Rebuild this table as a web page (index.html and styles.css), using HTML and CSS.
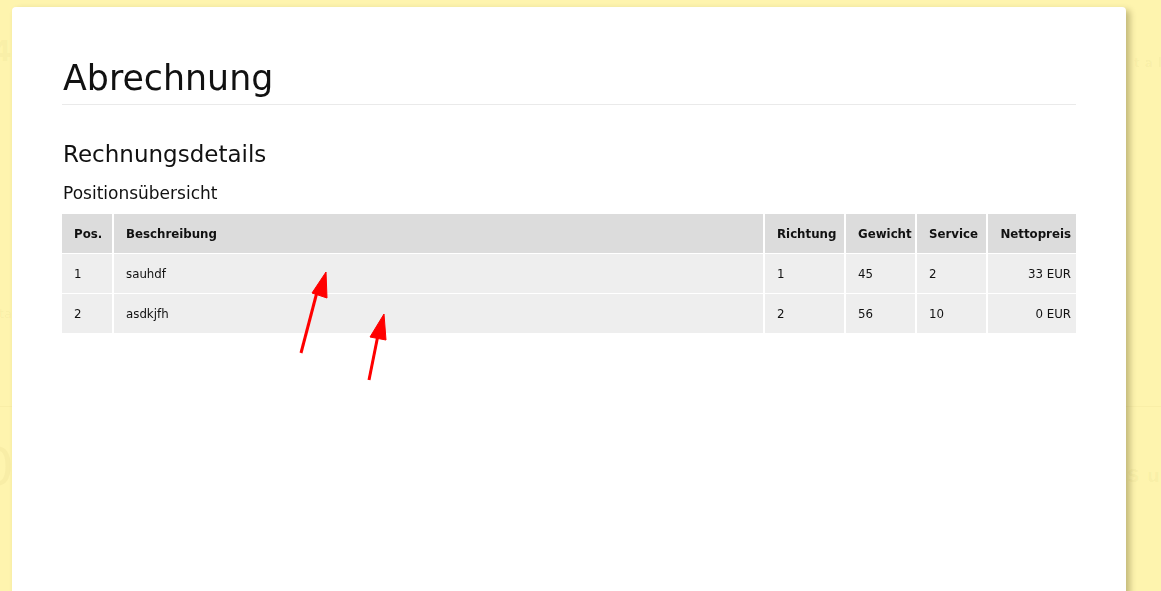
FILE: index.html
```html
<!DOCTYPE html>
<html lang="de">
<head>
<meta charset="utf-8">
<title>Abrechnung</title>
<link rel="stylesheet" href="styles.css">
</head>
<body>
<div class="dashboard">
  <div class="dash-row dash-row-top">
    <div class="dash-edge">
      <div class="dash-num">4</div>
      <div class="dash-small">sta</div>
    </div>
    <div class="dash-mid"></div>
    <div class="dash-side">
      <div class="dash-label">tal</div>
    </div>
  </div>
  <div class="dash-row dash-row-bottom">
    <div class="dash-edge">
      <div class="dash-big">0</div>
    </div>
    <div class="dash-mid"></div>
    <div class="dash-side">
      <div class="dash-label-lg">Sut</div>
    </div>
  </div>
</div>

<div class="modal">
  <h1 class="title">Abrechnung</h1>
  <h3 class="section">Rechnungsdetails</h3>
  <h4 class="subsection">Positionsübersicht</h4>
  <div class="grid-table" role="table">
    <div class="tr th-row" role="row">
      <div class="cell" role="columnheader">Pos.</div>
      <div class="cell" role="columnheader">Beschreibung</div>
      <div class="cell" role="columnheader">Richtung</div>
      <div class="cell" role="columnheader">Gewicht</div>
      <div class="cell" role="columnheader">Service</div>
      <div class="cell right" role="columnheader">Nettopreis</div>
    </div>
    <div class="tr" role="row">
      <div class="cell" role="cell">1</div>
      <div class="cell" role="cell">sauhdf</div>
      <div class="cell" role="cell">1</div>
      <div class="cell" role="cell">45</div>
      <div class="cell" role="cell">2</div>
      <div class="cell right" role="cell">33 EUR</div>
    </div>
    <div class="tr" role="row">
      <div class="cell" role="cell">2</div>
      <div class="cell" role="cell">asdkjfh</div>
      <div class="cell" role="cell">2</div>
      <div class="cell" role="cell">56</div>
      <div class="cell" role="cell">10</div>
      <div class="cell right" role="cell">0 EUR</div>
    </div>
  </div>
</div>

<svg class="arrows" width="1161" height="591" viewBox="0 0 1161 591" aria-hidden="true">
  <g fill="#ff0000" stroke="#ff0000">
    <line x1="301" y1="353" x2="317" y2="292" stroke-width="3"/>
    <polygon points="326,272 312,293 327,298" stroke-width="1" stroke-linejoin="round"/>
    <line x1="369" y1="380" x2="378" y2="335" stroke-width="3"/>
    <polygon points="384,314 370,337 386,340" stroke-width="1" stroke-linejoin="round"/>
  </g>
</svg>
</body>
</html>
```

FILE: styles.css
```css
html, body {
  margin: 0;
  padding: 0;
  height: 100%;
  overflow: hidden;
}

body {
  background: #fef4ae;
  font-family: "DejaVu Sans", "Liberation Sans", sans-serif;
  color: #222;
}

/* background dashboard (under the modal) */
.dashboard {
  color: rgba(120, 100, 0, 0.045);
}

.dash-row {
  display: grid;
  grid-template-columns: 12px 1fr 35px;
}

.dash-row-top {
  height: 406px;
  border-bottom: 1px solid rgba(120, 100, 0, 0.04);
}

.dash-edge {
  display: flex;
  flex-direction: column;
  align-items: flex-end;
}

.dash-num {
  margin-top: 34px;
  font-size: 29px;
  font-weight: bold;
  line-height: 34px;
}

.dash-small {
  margin-top: 238px;
  font-size: 13px;
  line-height: 16px;
}

.dash-big {
  margin-top: 30px;
  font-size: 52px;
  line-height: 60px;
  margin-right: -2px;
}

.dash-side {
  padding-left: 8px;
}

.dash-label {
  margin-top: 56px;
  font-size: 12px;
  font-weight: bold;
  letter-spacing: 5px;
  line-height: 14px;
}

.dash-label-lg {
  margin-top: 58px;
  font-size: 18px;
  font-weight: bold;
  letter-spacing: 7px;
  line-height: 22px;
  margin-left: -7px;
}

/* modal panel */
.modal {
  position: fixed;
  top: 7px;
  left: 12px;
  width: 1114px;
  height: 640px;
  box-sizing: border-box;
  background: #fff;
  border-radius: 4px;
  box-shadow: 4px 3px 6px rgba(60, 50, 0, 0.3);
  padding: 51px 50px 0;
}

.title {
  margin: 0;
  padding-left: 1px;
  font-size: 34.8px;
  font-weight: normal;
  line-height: 40px;
  padding-bottom: 6px;
  border-bottom: 1px solid #eaeaea;
  color: #111;
}

.section {
  margin: 36px 0 0;
  padding-left: 1px;
  font-size: 23px;
  font-weight: normal;
  line-height: 26px;
  color: #111;
}

.subsection {
  margin: 16px 0 0;
  padding-left: 1px;
  font-size: 17px;
  font-weight: normal;
  line-height: 20px;
  color: #111;
}

.grid-table {
  margin-top: 11px;
  font-size: 11.8px;
  color: #111;
}

.tr {
  display: grid;
  grid-template-columns: 52px 1fr 81px 71px 71px 88px;
  background: #eeeeee;
  border-bottom: 1px solid #fff;
}

.th-row {
  background: #dcdcdc;
  font-weight: bold;
}

.cell {
  height: 39px;
  display: flex;
  align-items: center;
  padding-left: 12px;
  border-right: 2px solid #fff;
  white-space: nowrap;
}

.cell:last-child {
  border-right: 0;
}

.cell.right {
  justify-content: flex-end;
  padding-left: 0;
  padding-right: 5px;
}

.arrows {
  position: fixed;
  top: 0;
  left: 0;
  pointer-events: none;
}
```
